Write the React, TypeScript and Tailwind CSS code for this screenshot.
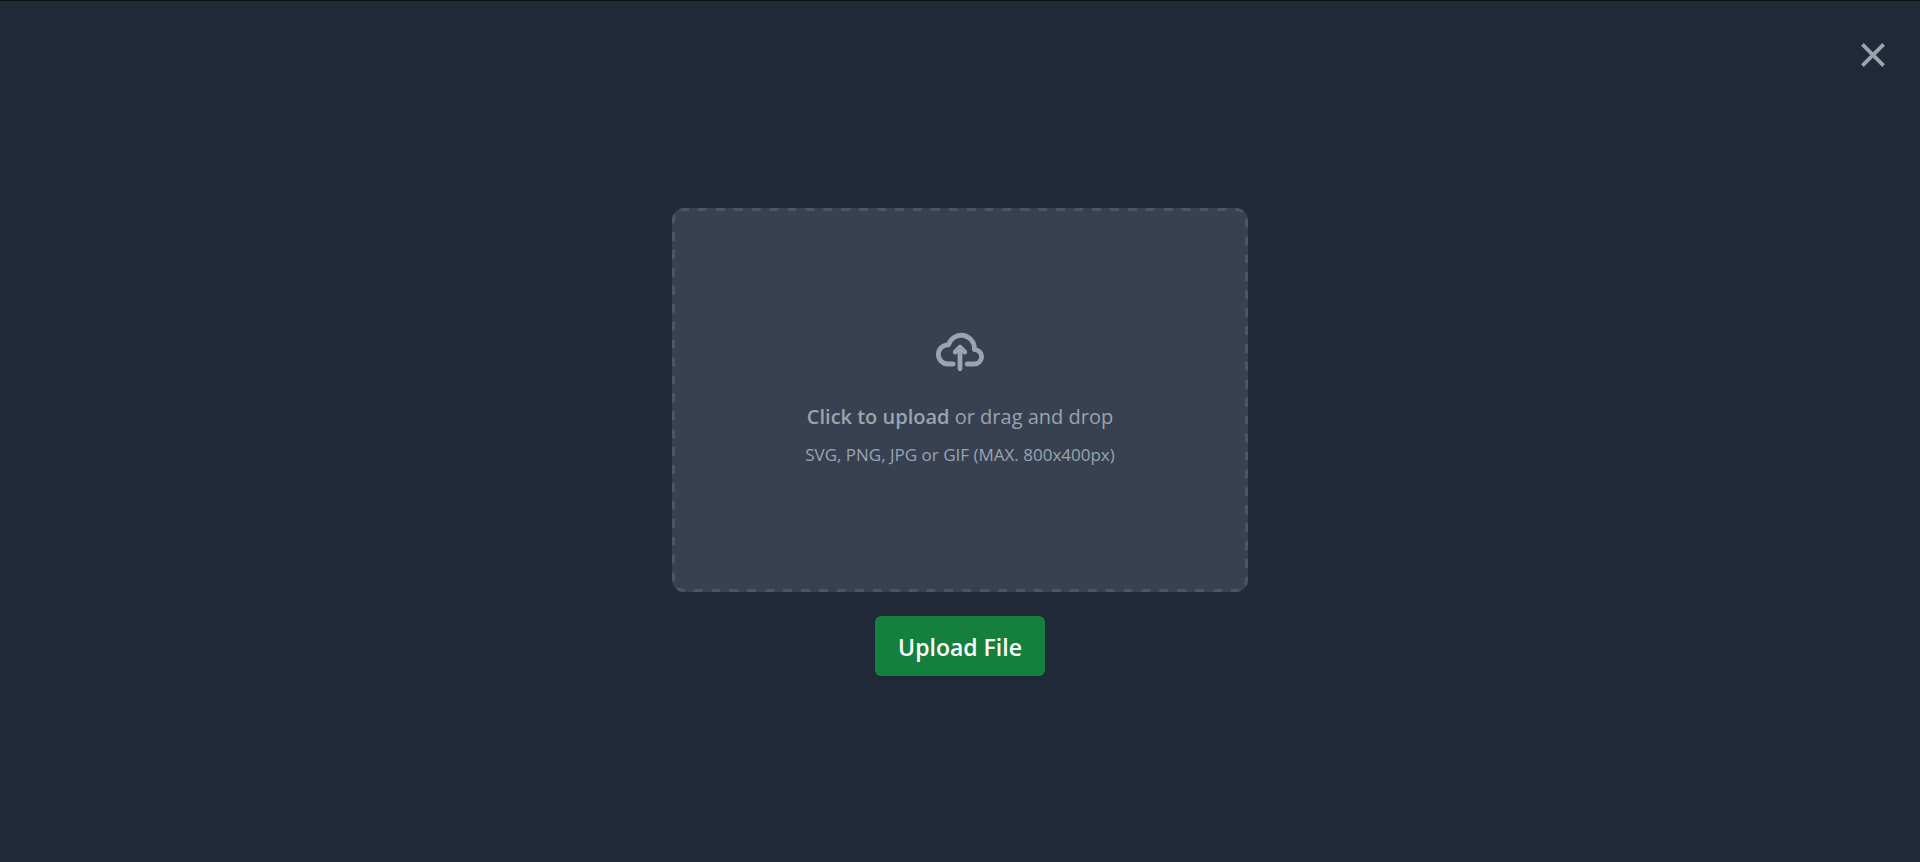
export default function App() {
  return (
    <main className="flex min-h-screen flex-col border-t border-t-[#0b0d12] bg-[#1f2937] font-['Open_Sans','Noto_Sans',sans-serif]">
      <header className="flex justify-end px-[31px] pt-9">
        <button type="button" aria-label="Close" className="flex h-9 w-8 items-center justify-center text-[#9ca3af]">
          <svg viewBox="0 0 24 24" className="size-6" fill="none" stroke="currentColor" strokeWidth="3.8" aria-hidden="true">
            <path d="M1.4 1.4 22.6 22.6M22.6 1.4 1.4 22.6" />
          </svg>
        </button>
      </header>
      <form className="flex flex-1 flex-col items-center gap-6 pt-[135px]" onSubmit={(e) => e.preventDefault()}>
        <label
          htmlFor="dropzone-file"
          className="relative flex h-96 w-full max-w-xl cursor-pointer flex-col items-center justify-center rounded-xl bg-[#374151] pb-[6px] text-[#9ca3af]"
        >
          {/* Dashed outline: the outer half of the stroke is clipped away */}
          <svg className="pointer-events-none absolute inset-0 size-full overflow-hidden rounded-xl" aria-hidden="true">
            <rect
              width="100%"
              height="100%"
              rx="12"
              fill="none"
              stroke="#4b5563"
              strokeWidth="6"
              pathLength="1908"
              strokeDasharray="9 9"
              strokeDashoffset="4"
            />
          </svg>
          <svg viewBox="0 0 20 16" className="mb-[26px] size-12" fill="none" aria-hidden="true">
            <path
              stroke="currentColor"
              strokeLinecap="round"
              strokeLinejoin="round"
              strokeWidth="2"
              d="M13 13h3a3 3 0 0 0 0-6h-.025A5.56 5.56 0 0 0 16 6.5 5.5 5.5 0 0 0 5.207 5.021C5.137 5.017 5.071 5 5 5a4 4 0 0 0 0 8h2.167M10 15V6m0 0L8 8m2-2 2 2"
            />
          </svg>
          <span className="mb-[11px] text-[20px] leading-[30px]">
            <span className="font-semibold">Click to upload</span> or drag and drop
          </span>
          <span className="text-[17px] leading-6">SVG, PNG, JPG or GIF (MAX. 800x400px)</span>
          <input id="dropzone-file" type="file" className="sr-only" />
        </label>
        <button type="submit" className="rounded-md bg-[#15803d] px-[23px] pt-[13px] pb-[11px] text-[23px] leading-9 font-semibold text-white">
          Upload File
        </button>
      </form>
    </main>
  );
}
